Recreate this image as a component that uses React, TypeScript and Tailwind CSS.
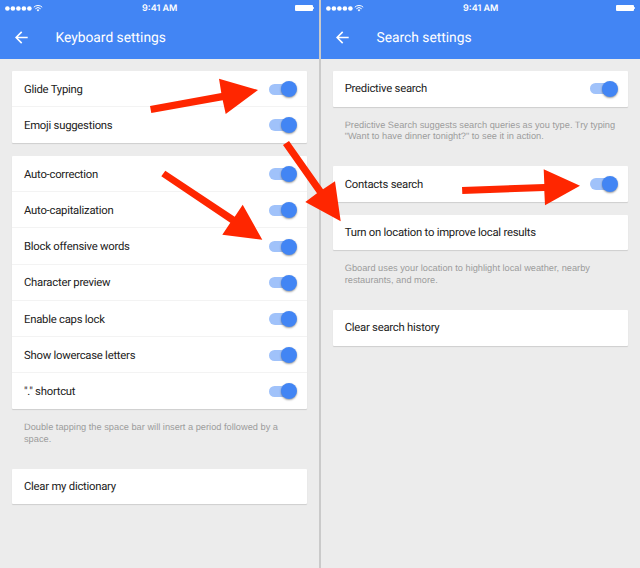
import React from "react";

type Row = { label: string; toggle?: boolean };

const ROBOTO = "font-['Roboto','Liberation_Sans',sans-serif]";

function StatusBar() {
  return (
    <div className="flex h-4 items-center justify-between pl-[5px] pr-[4.5px] text-white">
      <div className="flex w-20 items-center">
        <svg className="h-[5px] w-[27px]" viewBox="0 0 27 5" fill="white">
          {[0, 1, 2, 3, 4].map((i) => (
            <circle key={i} cx={2.4 + i * 5.5} cy="2.5" r="2.3" />
          ))}
        </svg>
        <svg className="ml-[0.5px] h-[8px] w-[10px]" viewBox="0 0 10 8" fill="none" stroke="white">
          <path d="M0.8 3.2a6 6 0 0 1 8.4 0" strokeWidth="1" />
          <path d="M2.3 4.8a3.8 3.8 0 0 1 5.4 0" strokeWidth="1" />
          <path d="M5 7.4L3.6 6a2 2 0 0 1 2.8 0z" fill="white" stroke="none" />
        </svg>
      </div>
      <span className="pt-px font-['Inter','Liberation_Sans',sans-serif] text-[9px] font-semibold leading-4">
        9:41 AM
      </span>
      <div className="flex w-20 items-center justify-end gap-[0.6px]">
        <span className="h-[6.8px] w-[17.5px] rounded-[1px] bg-white" />
        <span className="h-[2.6px] w-[1.1px] rounded-r-full bg-white" />
      </div>
    </div>
  );
}

function Header({ title }: { title: string }) {
  return (
    <header className="h-[58.6px] bg-[#4285f4]">
      <StatusBar />
      <div className="flex h-[42px] items-center pl-[15px]">
        <svg className="size-[13px]" viewBox="0 0 13 13" fill="none" stroke="white" strokeWidth="1.6">
          <path d="M12.7 6.5H1.4M6.7 0.9L1.1 6.5l5.6 5.6" />
        </svg>
        <h1 className={`${ROBOTO} ml-[27.5px] pt-px text-[13.8px] leading-5 text-white`}>{title}</h1>
      </div>
    </header>
  );
}

function Toggle() {
  return (
    <span className="flex h-4 w-7 items-center">
      <span className="h-[11.2px] w-[20px] rounded-l-full bg-[#a0c2fa]" />
      <span className="-ml-2 size-4 rounded-full bg-[#4285f4] shadow-[0_1px_2px_rgba(0,0,0,0.4)]" />
    </span>
  );
}

function Card({ rows }: { rows: Row[] }) {
  return (
    <section className="rounded-[1px] bg-white shadow-[0_1px_1px_rgba(0,0,0,0.13)]">
      {rows.map((r) => (
        <div
          key={r.label}
          className="flex h-[36.25px] items-center justify-between pl-[11.7px] pr-[10px] shadow-[inset_0_-1px_#f3f3f3] last:h-[35.7px] last:shadow-none"
        >
          <span className={`${ROBOTO} pt-[1.2px] text-[11.3px] leading-4 tracking-[-0.24px] text-[#212121]`}>{r.label}</span>
          {r.toggle && <Toggle />}
        </div>
      ))}
    </section>
  );
}

function Note({ lines }: { lines: string[] }) {
  return (
    <p className="mb-[23px] ml-[11.7px] mt-[13px] whitespace-nowrap font-['Liberation_Sans',sans-serif] text-[9.25px] leading-[11.7px] text-[#9c9c9c]">
      {lines.map((l) => (
        <span key={l} className="block">{l}</span>
      ))}
    </p>
  );
}

const ARROWS = [
  "150,106 221.3,93 219,78.7 258,90 225.7,114 222.7,100.3 151.3,113",
  "165.3,170.7 234.7,216.7 242.7,204.7 262.3,239.7 222.3,234.7 230.3,222.7 161.3,176.3",
  "289,141 323,189.3 335,181.3 340.7,221.3 305.3,202 317,193.3 283,145",
  "462,187 544.3,184 543.7,169.3 580,185.7 545,205.3 544.3,191 462.3,194",
];

const toggles = (labels: string[]): Row[] => labels.map((label) => ({ label, toggle: true }));

export default function App() {
  return (
    <div className="relative flex h-[568px] w-[640px] overflow-hidden bg-[#ececec] [text-rendering:geometricPrecision]">
      <div className="w-[319px]">
        <Header title="Keyboard settings" />
        <main className="flex flex-col pl-[12.3px] pr-3 pt-[12.4px]">
          <Card rows={toggles(["Glide Typing", "Emoji suggestions"])} />
          <div className="h-[13px]" />
          <Card
            rows={toggles([
              "Auto-correction",
              "Auto-capitalization",
              "Block offensive words",
              "Character preview",
              "Enable caps lock",
              "Show lowercase letters",
              '"." shortcut',
            ])}
          />
          <Note lines={["Double tapping the space bar will insert a period followed by a", "space."]} />
          <Card rows={[{ label: "Clear my dictionary" }]} />
        </main>
      </div>
      <div className="w-[2px] bg-[#cacaca]" />
      <div className="w-[319px]">
        <Header title="Search settings" />
        <main className="flex flex-col pl-3 pr-[12.3px] pt-[12.4px]">
          <Card rows={toggles(["Predictive search"])} />
          <Note lines={["Predictive Search suggests search queries as you type. Try typing", "\"Want to have dinner tonight?\" to see it in action."]} />
          <Card rows={toggles(["Contacts search"])} />
          <div className="h-[13px]" />
          <Card rows={[{ label: "Turn on location to improve local results" }]} />
          <Note lines={["Gboard uses your location to highlight local weather, nearby", "restaurants, and more."]} />
          <Card rows={[{ label: "Clear search history" }]} />
        </main>
      </div>
      <svg className="pointer-events-none absolute inset-0" width="640" height="568" viewBox="0 0 640 568" fill="#ff2600">
        {ARROWS.map((p) => (
          <polygon key={p} points={p} />
        ))}
      </svg>
    </div>
  );
}
